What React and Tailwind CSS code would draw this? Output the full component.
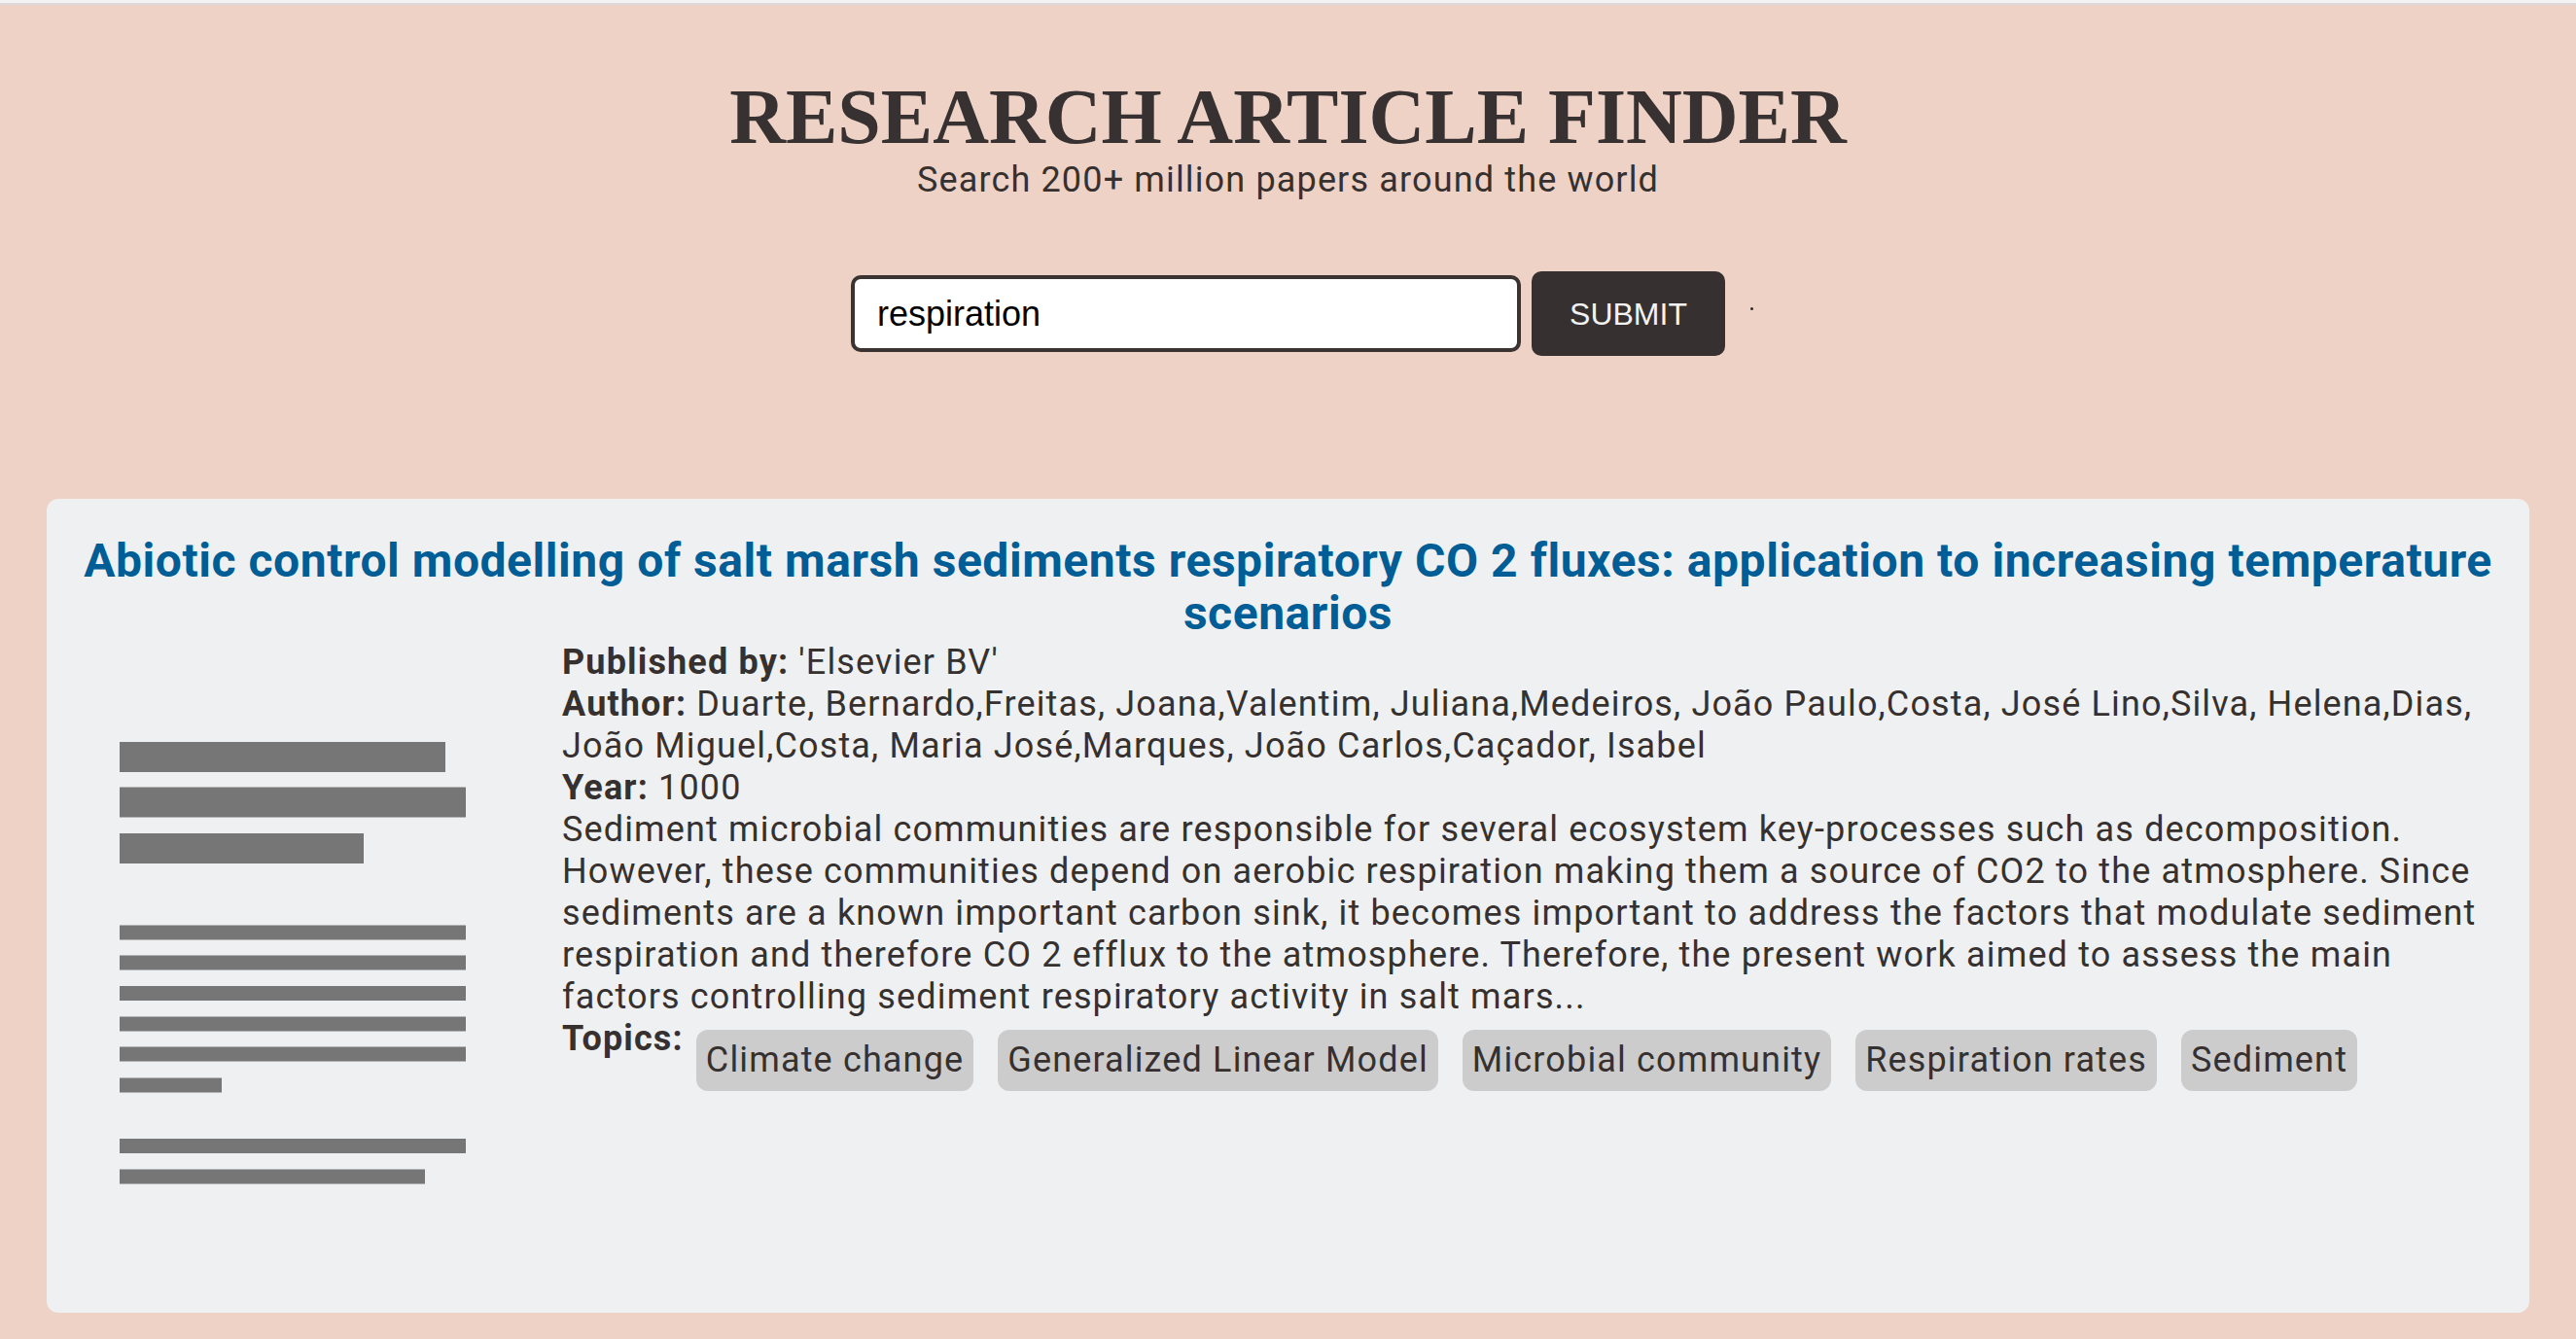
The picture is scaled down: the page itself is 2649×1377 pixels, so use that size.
import React from "react";

const topics = [
  "Climate change",
  "Generalized Linear Model",
  "Microbial community",
  "Respiration rates",
  "Sediment",
];

function Placeholder() {
  const bars = [
    [0, 335, 31],
    [46.5, 356, 31],
    [94, 251, 31],
    [188.5, 356, 15],
    [219.5, 356, 15],
    [251, 356, 15],
    [282.5, 356, 15],
    [313.5, 356, 15],
    [345.5, 105, 15],
    [408, 356, 15],
    [439.5, 314, 15],
  ];
  return (
    <svg width="356" height="455" viewBox="0 0 356 455" className="block">
      {bars.map(([y, w, h], i) => (
        <rect key={i} x="0" y={y} width={w} height={h} fill="#767676" />
      ))}
    </svg>
  );
}

export default function App() {
  return (
    <div className="min-h-screen bg-[#eed2c6] font-['Roboto',sans-serif] text-[#36302f]">
      <div className="h-[5px] border-t-[3px] border-[#f4f2f2] bg-[#dbd9de]" />
      <header className="flex flex-col items-center pt-[75px]">
        <h1 className="font-['Liberation_Serif',serif] text-[80px] font-bold leading-none text-[#373131]">
          RESEARCH ARTICLE FINDER
        </h1>
        <p className="mt-[4px] text-[36px] leading-[42px] tracking-[1.15px] text-[#36302f]">
          Search 200+ million papers around the world
        </p>
        <form
          className="relative mt-[73px] flex items-center gap-[11px]"
          onSubmit={(e) => e.preventDefault()}
        >
          <input
            type="text"
            defaultValue="respiration"
            className="h-[79px] w-[689px] rounded-[10px] border-[4px] border-[#3a3331] bg-white pl-[23px] font-['Liberation_Sans',Arial,sans-serif] text-[36px] text-black outline-none"
          />
          <button
            type="submit"
            className="h-[87px] w-[199px] rounded-[10px] bg-[#363130] font-['Liberation_Sans',Arial,sans-serif] text-[32px] text-[#f2f2f2]"
          >
            SUBMIT
          </button>
          <span className="absolute right-[-29px] top-[37px] h-[3px] w-[3px] rounded-full bg-[#2a2524]" />
        </form>
      </header>

      <main className="px-[48px] pt-[147px] pb-[27px]">
        <article className="h-[837px] rounded-[12px] bg-[#eff0f2] px-[32px] pt-[37px]">
          <h2 className="text-center text-[48px] font-bold leading-[54px] tracking-[0.55px] text-[#005d96]">
            Abiotic control modelling of salt marsh sediments respiratory CO 2
            fluxes: application to increasing temperature scenarios
          </h2>
          <div className="flex">
            <div className="w-[498px] shrink-0 pl-[43px] pt-[105px]">
              <Placeholder />
            </div>
            <div className="mt-[2px] min-w-0 flex-1 text-[36px] leading-[43px] tracking-[1.15px]">
              <p>
                <span className="font-bold">Published by:</span> 'Elsevier BV'
              </p>
              <p>
                <span className="font-bold">Author:</span> Duarte,
                Bernardo,Freitas, Joana,Valentim, Juliana,Medeiros, João
                Paulo,Costa, José Lino,Silva, Helena,Dias, João Miguel,Costa,
                Maria José,Marques, João Carlos,Caçador, Isabel
              </p>
              <p>
                <span className="font-bold">Year:</span> 1000
              </p>
              <p>
                Sediment microbial communities are responsible for several
                ecosystem key-processes such as decomposition. However, these
                communities depend on aerobic respiration making them a source
                of CO2 to the atmosphere. Since sediments are a known important
                carbon sink, it becomes important to address the factors that
                modulate sediment respiration and therefore CO 2 efflux to the
                atmosphere. Therefore, the present work aimed to assess the main
                factors controlling sediment respiratory activity in salt mars...
              </p>
              <div className="flex items-start gap-[13px]">
                <span className="font-bold">Topics:</span>
                <ul className="mt-[12px] flex flex-wrap gap-[25px]">
                  {topics.map((t) => (
                    <li
                      key={t}
                      className="rounded-[12px] bg-[#cccccc] px-[10px] py-[10px] text-[#36302f]"
                    >
                      {t}
                    </li>
                  ))}
                </ul>
              </div>
            </div>
          </div>
        </article>
      </main>
    </div>
  );
}
